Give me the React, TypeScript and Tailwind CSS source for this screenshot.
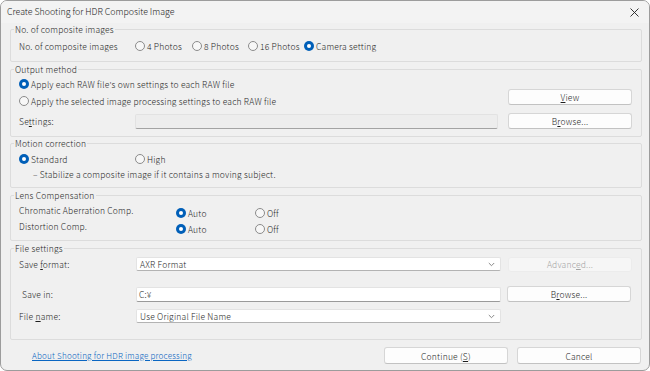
import React from "react";

const Radio = ({ checked }: { checked?: boolean }) =>
  checked ? (
    <span className="w-[10px] h-[10px] rounded-full bg-[#005fb8] flex items-center justify-center shrink-0">
      <span className="w-[4px] h-[4px] rounded-full bg-white" />
    </span>
  ) : (
    <span className="w-[10px] h-[10px] rounded-full border border-[#8b8b8b] bg-[#f7f7f7] shrink-0" />
  );

const RadioItem = ({
  checked,
  label,
  className = "",
}: {
  checked?: boolean;
  label: React.ReactNode;
  className?: string;
}) => (
  <div className={"flex items-center gap-[2px] " + className}>
    <Radio checked={checked} />
    <span className="leading-[12px] whitespace-nowrap">{label}</span>
  </div>
);

const Btn = ({
  children,
  className = "",
}: {
  children: React.ReactNode;
  className?: string;
}) => (
  <div
    className={
      "w-[124px] flex items-center justify-center rounded-[3px] border border-[#d6d6d6] border-b-[#c2c2c2] bg-[#fdfdfd] leading-[12px] " +
      className
    }
  >
    {children}
  </div>
);

const Chevron = () => (
  <svg width="7" height="5" viewBox="0 0 7 5" className="mr-[5px]">
    <path d="M0.8 1 L3.5 3.7 L6.2 1" fill="none" stroke="#7a7a7a" strokeWidth="0.9" />
  </svg>
);

const Group = ({
  title,
  className = "",
  children,
}: {
  title: string;
  className?: string;
  children: React.ReactNode;
}) => (
  <fieldset className={"border border-[#dcdcdc] rounded-[2px] " + className}>
    <legend className="ml-[3px] px-[1px] leading-[12px]">{title}</legend>
    {children}
  </fieldset>
);

export default function App() {
  return (
    <div className="w-[650px] h-[371px] bg-white font-['Noto_Sans_CJK_JP','Noto_Sans',sans-serif] font-light tracking-[0.2px] text-[8.5px] text-[#1e1e1e]">
      <div className="w-full h-full rounded-[7px] border border-[#9c9c9c] bg-[#f0f0f0] overflow-hidden flex flex-col">
        {/* Title bar */}
        <div className="h-[22px] shrink-0 flex items-center justify-between pl-[6px] pr-[10px] bg-[#f3f3f3]">
          <span className="text-[8.8px] leading-[12px] tracking-normal text-[#1a1a1a]">
            Create Shooting for HDR Composite Image
          </span>
          <svg width="9" height="9" viewBox="0 0 9 9">
            <path d="M0.5 0.5 L8.5 8.5 M8.5 0.5 L0.5 8.5" stroke="#1f1f1f" strokeWidth="0.9" />
          </svg>
        </div>

        <div className="pl-[9px] pr-[7px] flex flex-col">
          {/* Group 1 */}
          <Group title="No. of composite images" className="pb-[4px]">
            <div className="h-[22px] flex items-center">
              <span className="w-[124px] pl-[8px] leading-[12px]">No. of composite images</span>
              <RadioItem label="4 Photos" className="w-[57px]" />
              <RadioItem label="8 Photos" className="w-[56px]" />
              <RadioItem label="16 Photos" className="w-[56px]" />
              <RadioItem checked label="Camera setting" />
            </div>
          </Group>

          {/* Group 2 */}
          <Group title="Output method" className="mt-[1px] pb-[7px]">
            <div className="flex pr-[9px]">
              <div className="flex-1 flex flex-col pl-[8px]">
                <div className="h-[18px] flex items-center">
                  <RadioItem checked label="Apply each RAW file's own settings to each RAW file" />
                </div>
                <div className="h-[15px] flex items-center">
                  <RadioItem label="Apply the selected image processing settings to each RAW file" />
                </div>
              </div>
              <Btn className="mt-[14px] h-[16px]">
                <span>
                  <span className="underline">V</span>iew
                </span>
              </Btn>
            </div>
            <div className="mt-[5px] h-[16px] flex items-center pr-[9px]">
              <span className="w-[124px] pl-[8px] leading-[12px]">
                Se<span className="underline">t</span>tings:
              </span>
              <div className="w-[363px] h-[15px] bg-[#ededed] border border-[#e2e2e2] border-b-[#a3a3a3] rounded-[2px]" />
              <Btn className="ml-[10px] h-[16px]">
                <span>
                  B<span className="underline">r</span>owse...
                </span>
              </Btn>
            </div>
          </Group>

          {/* Group 3 */}
          <Group title="Motion correction" className="pb-[7px]">
            <div className="h-[20px] flex items-center pl-[8px]">
              <RadioItem checked label="Standard" className="w-[116px]" />
              <RadioItem label="High" />
            </div>
            <div className="h-[11px] flex items-center pl-[22px] leading-[11px]">
              – Stabilize a composite image if it contains a moving subject.
            </div>
          </Group>

          {/* Group 4 */}
          <Group title="Lens Compensation" className="mt-[1px] pb-[7px]">
            {["Chromatic Aberration Comp.", "Distortion Comp."].map((l) => (
              <div key={l} className="h-[16px] flex items-start">
                <span className="w-[165px] pl-[8px] mt-[3px] leading-[12px]">{l}</span>
                <div className="flex items-center mt-[6px]">
                  <RadioItem checked label="Auto" className="w-[79px]" />
                  <RadioItem label="Off" />
                </div>
              </div>
            ))}
          </Group>

          {/* Group 5 */}
          <Group title="File settings" className="mt-[1px] pb-[13px]">
            <div className="h-[20px] flex items-center">
              <span className="w-[125px] pl-[8px] leading-[12px]">
                Save <span className="underline">f</span>ormat:
              </span>
              <div className="w-[365px] h-[14px] bg-white border border-[#e3e3e3] border-b-[#b3b3b3] rounded-[2px] flex items-center justify-between pl-[3px]">
                <span className="leading-[12px]">AXR Format</span>
                <Chevron />
              </div>
              <div className="ml-[7px] w-[124px] h-[15px] rounded-[3px] bg-[#f6f6f6] border border-[#ececec] flex items-center justify-center text-[#a3a3a3] leading-[12px]">
                <span>
                  Advanc<span className="underline">e</span>d...
                </span>
              </div>
            </div>
            <div className="mt-[8px] h-[24px] flex items-center">
              <span className="w-[125px] pl-[11px] leading-[12px]">Save in:</span>
              <div className="w-[365px] h-[15px] bg-white border border-[#e3e3e3] border-b-[#9a9a9a] rounded-[2px] flex items-center pl-[2px]">
                <span className="leading-[12px]">C:¥</span>
              </div>
              <Btn className="ml-[6px] h-[16px]">
                <span>
                  B<span className="underline">r</span>owse...
                </span>
              </Btn>
            </div>
            <div className="h-[20px] flex items-center">
              <span className="w-[125px] pl-[8px] leading-[12px]">
                File <span className="underline">n</span>ame:
              </span>
              <div className="w-[365px] h-[14px] bg-white border border-[#e3e3e3] border-b-[#b3b3b3] rounded-[2px] flex items-center justify-between pl-[3px]">
                <span className="leading-[12px]">Use Original File Name</span>
                <Chevron />
              </div>
            </div>
          </Group>

          {/* Footer */}
          <div className="flex items-center mt-[7px] pr-[1px]">
            <a className="ml-[22px] text-[#0a66c2] underline leading-[12px] text-[8.1px]">
              About Shooting for HDR image processing
            </a>
            <div className="flex-1" />
            <Btn className="h-[17px] border-[#6ea2d6] border-b-[#6ea2d6]">
              <span>
                Continue (<span className="underline">S</span>)
              </span>
            </Btn>
            <Btn className="ml-[9px] h-[17px]">Cancel</Btn>
          </div>
        </div>
      </div>
    </div>
  );
}
